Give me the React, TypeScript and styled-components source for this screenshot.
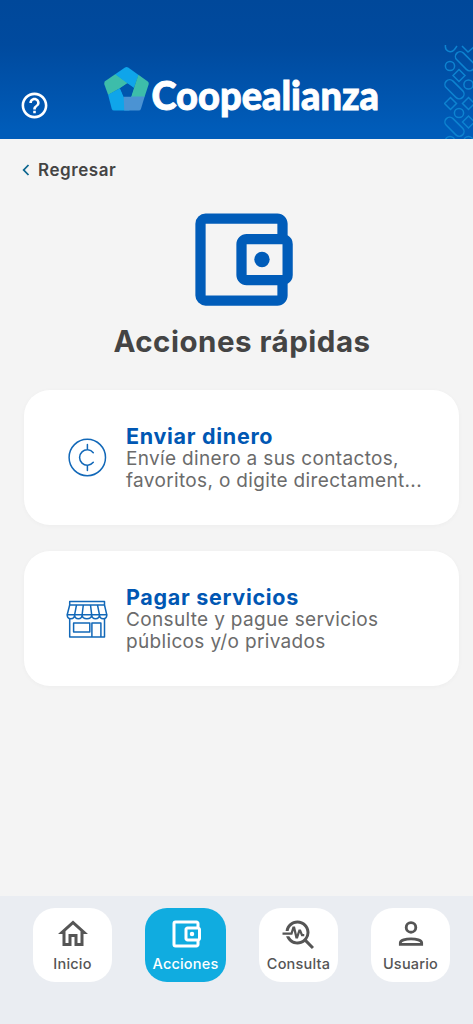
import React, { useState } from 'react';
import styled, { createGlobalStyle } from 'styled-components';
import {
  MdHelpOutline,
  MdOutlineHome,
  MdTroubleshoot,
} from 'react-icons/md';

const GlobalStyle = createGlobalStyle`
  * {
    box-sizing: border-box;
  }

  body {
    margin: 0;
    background: #f4f4f4;
    font-family: Inter, 'Liberation Sans', sans-serif;
  }

  button {
    border: none;
    padding: 0;
    background: none;
    font: inherit;
    cursor: pointer;
  }
`;

const Screen = styled.div`
  width: 473px;
  height: 1024px;
  display: flex;
  flex-direction: column;
  background: #f4f4f4;
  overflow: hidden;
`;

const Header = styled.header`
  height: 139px;
  flex-shrink: 0;
  display: flex;
  align-items: flex-start;
  padding-top: 45px;
  background: linear-gradient(#00489a 0, #004a9e 45px, #005cb9 130px, #005cb9 100%);
`;

const HelpButton = styled.button`
  display: flex;
  color: white;
  margin: 45px 0 0 19px;
`;

const Logo = styled.svg`
  display: block;
  margin: 15px 0 0 47px;
`;

const Pattern = styled.svg`
  display: block;
  margin-left: auto;
`;

const Main = styled.main`
  flex: 1;
  display: flex;
  flex-direction: column;
  align-items: center;
`;

const BackButton = styled.button`
  align-self: flex-start;
  display: flex;
  align-items: center;
  gap: 8px;
  margin: 20px 0 0 22px;
  height: 22px;
  color: #444;
  font-size: 17px;
  font-weight: 600;
  letter-spacing: 0.55px;
`;

const WalletWrapper = styled.div`
  display: flex;
  margin: 17px 0 0 10px;
  color: #005cb9;
`;

const Title = styled.h1`
  margin: 2px 0 0 11px;
  color: #444;
  font-size: 29.5px;
  line-height: 36px;
  font-weight: 700;
  letter-spacing: 0.5px;
  white-space: nowrap;
`;

const CardList = styled.div`
  width: 435px;
  margin: 31px 0 0 10px;
  display: flex;
  flex-direction: column;
  gap: 26px;
`;

const Card = styled.button`
  height: 135px;
  display: flex;
  align-items: center;
  padding-left: 42px;
  text-align: left;
  background: white;
  border-radius: 26px;
  box-shadow: 0 1px 5px rgba(0, 0, 0, 0.03);
`;

const CardIcon = styled.span`
  display: flex;
  width: 42px;
  margin-right: 18px;
`;

const CardText = styled.span`
  display: flex;
  flex-direction: column;
`;

const CardTitle = styled.span`
  color: #0057b3;
  font-size: 21.5px;
  line-height: 24px;
  font-weight: 700;
  letter-spacing: 0.7px;
`;

const CardDescription = styled.span`
  color: #6b6b6b;
  font-size: 19px;
  line-height: 22px;
  letter-spacing: 0.34px;
  white-space: pre;
`;

const TabBar = styled.nav`
  height: 128px;
  flex-shrink: 0;
  display: flex;
  justify-content: space-between;
  align-items: flex-start;
  padding: 12px 23px 0 33px;
  background: #eaedf2;
`;

const Tab = styled.button<{ $active: boolean }>`
  width: ${props => props.$active ? '81px' : '79px'};
  height: 74px;
  display: flex;
  flex-direction: column;
  align-items: center;
  padding-top: 8px;
  border-radius: 22px;
  color: ${props => props.$active ? 'white' : '#555'};
  background: ${props => props.$active ? '#10ace0' : 'white'};
`;

const TabLabel = styled.span`
  margin-top: 2px;
  font-size: 14.5px;
  line-height: 19px;
  font-weight: 500;
  letter-spacing: 0.2px;
`;

const Wallet: React.FC<{ size: number }> = ({ size }) => (
  <svg width={size} height={size} viewBox="0 0 24 24" fill="currentColor">
    <path d="M21 7.28V5c0-1.1-.9-2-2-2H5a2 2 0 0 0-2 2v14a2 2 0 0 0 2 2h14c1.1 0 2-.9 2-2v-2.28A2 2 0 0 0 22 15V9a2 2 0 0 0-1-1.72zM20 9v6h-7V9h7zM5 19V5h14v2h-6c-1.1 0-2 .9-2 2v6c0 1.1.9 2 2 2h6v2H5z" />
    <circle cx="16" cy="12" r="1.5" />
  </svg>
);

const UserIcon = () => (
  <svg width="36" height="36" viewBox="0 0 24 24" fill="none" stroke="currentColor" strokeWidth="1.9">
    <circle cx="12" cy="7.6" r="3.2" />
    <path d="M4.9 18.9v-1c0-1.6 3.5-2.7 7.1-2.7s7.1 1.1 7.1 2.7v1z" />
  </svg>
);

const CoinIcon = () => (
  <svg width="42" height="42" viewBox="0 0 42 42" fill="none" stroke="#1268b8" strokeWidth="1.5" strokeLinecap="round">
    <circle cx="21.3" cy="20.5" r="18.2" />
    <path d="M27.3 15.7A7.7 7.7 0 1 0 27.3 25.3M21.4 7.5v5.2M21.4 28.3V33.5" />
  </svg>
);

const StoreIcon = () => (
  <svg width="42" height="42" viewBox="0 0 42 42" fill="none" stroke="#1268b8" strokeWidth="1.5" strokeLinejoin="round">
    <path d="M3.7 3.4h34.8V7H3.7zM3.7 7L1.2 16.8h39.6L38.5 7" />
    <path d="M10.5 7L8.6 16.8M17.3 7l-1.2 9.8M24.5 7l1.2 9.8M31.5 7l2 9.8" />
    <path d="M1.2 16.8c0 5.3 7.2 5.3 7.4 0 .2 5.3 7.3 5.3 7.5 0 .2 5.3 9.4 5.3 9.6 0 .2 5.3 7.5 5.3 7.8 0 .2 5.3 7.3 5.3 7.3 0" />
    <path d="M3.7 20.8V39h34.8V20.8M7.6 25h16.2v9H7.6zM25.9 39V25h9v14" />
  </svg>
);

const tabs = [
  { label: 'Inicio', icon: <MdOutlineHome size={36} /> },
  { label: 'Acciones', icon: <Wallet size={36} /> },
  { label: 'Consulta', icon: <MdTroubleshoot size={36} /> },
  { label: 'Usuario', icon: <UserIcon /> },
];

const App: React.FC = () => {
  const [activeTab, setActiveTab] = useState('Acciones');

  return (
    <Screen>
      <GlobalStyle />
      <Header>
        <HelpButton>
          <MdHelpOutline size={31} />
        </HelpButton>
        <Logo width="290" height="64" viewBox="97 60 290 64">
          <path d="M104.6 81.5L115.5 74 128 83l-8.5 5.5-11.3 6.5-4-11z" fill="#3dbdaa" />
          <path d="M115.2 74.2L125 67.4q1.6-1 3.2 0L138.6 75 134 88l-7-5z" fill="#0fa5ea" />
          <path d="M138.4 74.8l9.4 6.8q1.4 1 .9 2.7L144.5 97H131l3-9z" fill="#3dbdaa" />
          <path d="M108.1 94.8l11.8-6.6 4.1 9.3 5.5 13H114q-1.7 0-2.2-1.6z" fill="#0fa5ea" />
          <path d="M123.7 96.5h21l-3.8 12.4q-.5 1.6-2.2 1.6h-14.5z" fill="#4b93d3" />
          <path d="M127 83.5l6.4 4.6-2.4 8.4h-7.3l-3.3-8.3z" fill="#0056ad" />
          <text
            x="151.5"
            y="110.3"
            fill="white"
            stroke="white"
            strokeWidth="0.9"
            fontFamily="Lato, 'Open Sans', sans-serif"
            fontWeight="900"
            fontSize="39.5"
            textLength="227.5"
            lengthAdjust="spacingAndGlyphs"
          >
            Coopealianza
          </text>
        </Logo>
        <Pattern width="29" height="94" viewBox="0 0 29 94" fill="none" stroke="#0d83d0" strokeWidth="1.5">
          <path d="M1.5 0c-1 6 5 9 9 4.5L13 1M18 1l6 6 6-5" />
          <rect x="9.5" y="11.5" width="23" height="9.5" rx="4.75" transform="rotate(45 21 16.2)" />
          <circle cx="6" cy="21" r="4.6" />
          <path d="M15 24.5l6 6-6 6-6-6z" />
          <rect x="-1" y="39.5" width="23" height="9.5" rx="4.75" transform="rotate(45 10.5 44.2)" />
          <circle cx="24.5" cy="39.5" r="4.6" />
          <path d="M6.5 52.5l6 6-6 6-6-6zM24.5 52.5l6 6-6 6-6-6zM24.5 71l6 6-6 6-6-6z" />
          <circle cx="15" cy="68" r="4.6" />
          <rect x="-1" y="77" width="23" height="9.5" rx="4.75" transform="rotate(45 10.5 81.7)" />
          <circle cx="6" cy="96" r="4.6" />
          <circle cx="24.5" cy="96" r="4.6" />
        </Pattern>
      </Header>
      <Main>
        <BackButton>
          <svg width="8" height="12" viewBox="0 0 8 12" fill="none" stroke="#0c668f" strokeWidth="1.8">
            <path d="M6.5 1L1.7 6l4.8 5" />
          </svg>
          Regresar
        </BackButton>
        <WalletWrapper>
          <Wallet size={123} />
        </WalletWrapper>
        <Title>Acciones rápidas</Title>
        <CardList>
          <Card>
            <CardIcon><CoinIcon /></CardIcon>
            <CardText>
              <CardTitle>Enviar dinero</CardTitle>
              <CardDescription>{'Envíe dinero a sus contactos,\nfavoritos, o digite directament...'}</CardDescription>
            </CardText>
          </Card>
          <Card>
            <CardIcon><StoreIcon /></CardIcon>
            <CardText>
              <CardTitle>Pagar servicios</CardTitle>
              <CardDescription>{'Consulte y pague servicios\npúblicos y/o privados'}</CardDescription>
            </CardText>
          </Card>
        </CardList>
      </Main>
      <TabBar>
        {tabs.map(tab => (
          <Tab key={tab.label} $active={tab.label === activeTab} onClick={() => setActiveTab(tab.label)}>
            {tab.icon}
            <TabLabel>{tab.label}</TabLabel>
          </Tab>
        ))}
      </TabBar>
    </Screen>
  );
};

export default App;
